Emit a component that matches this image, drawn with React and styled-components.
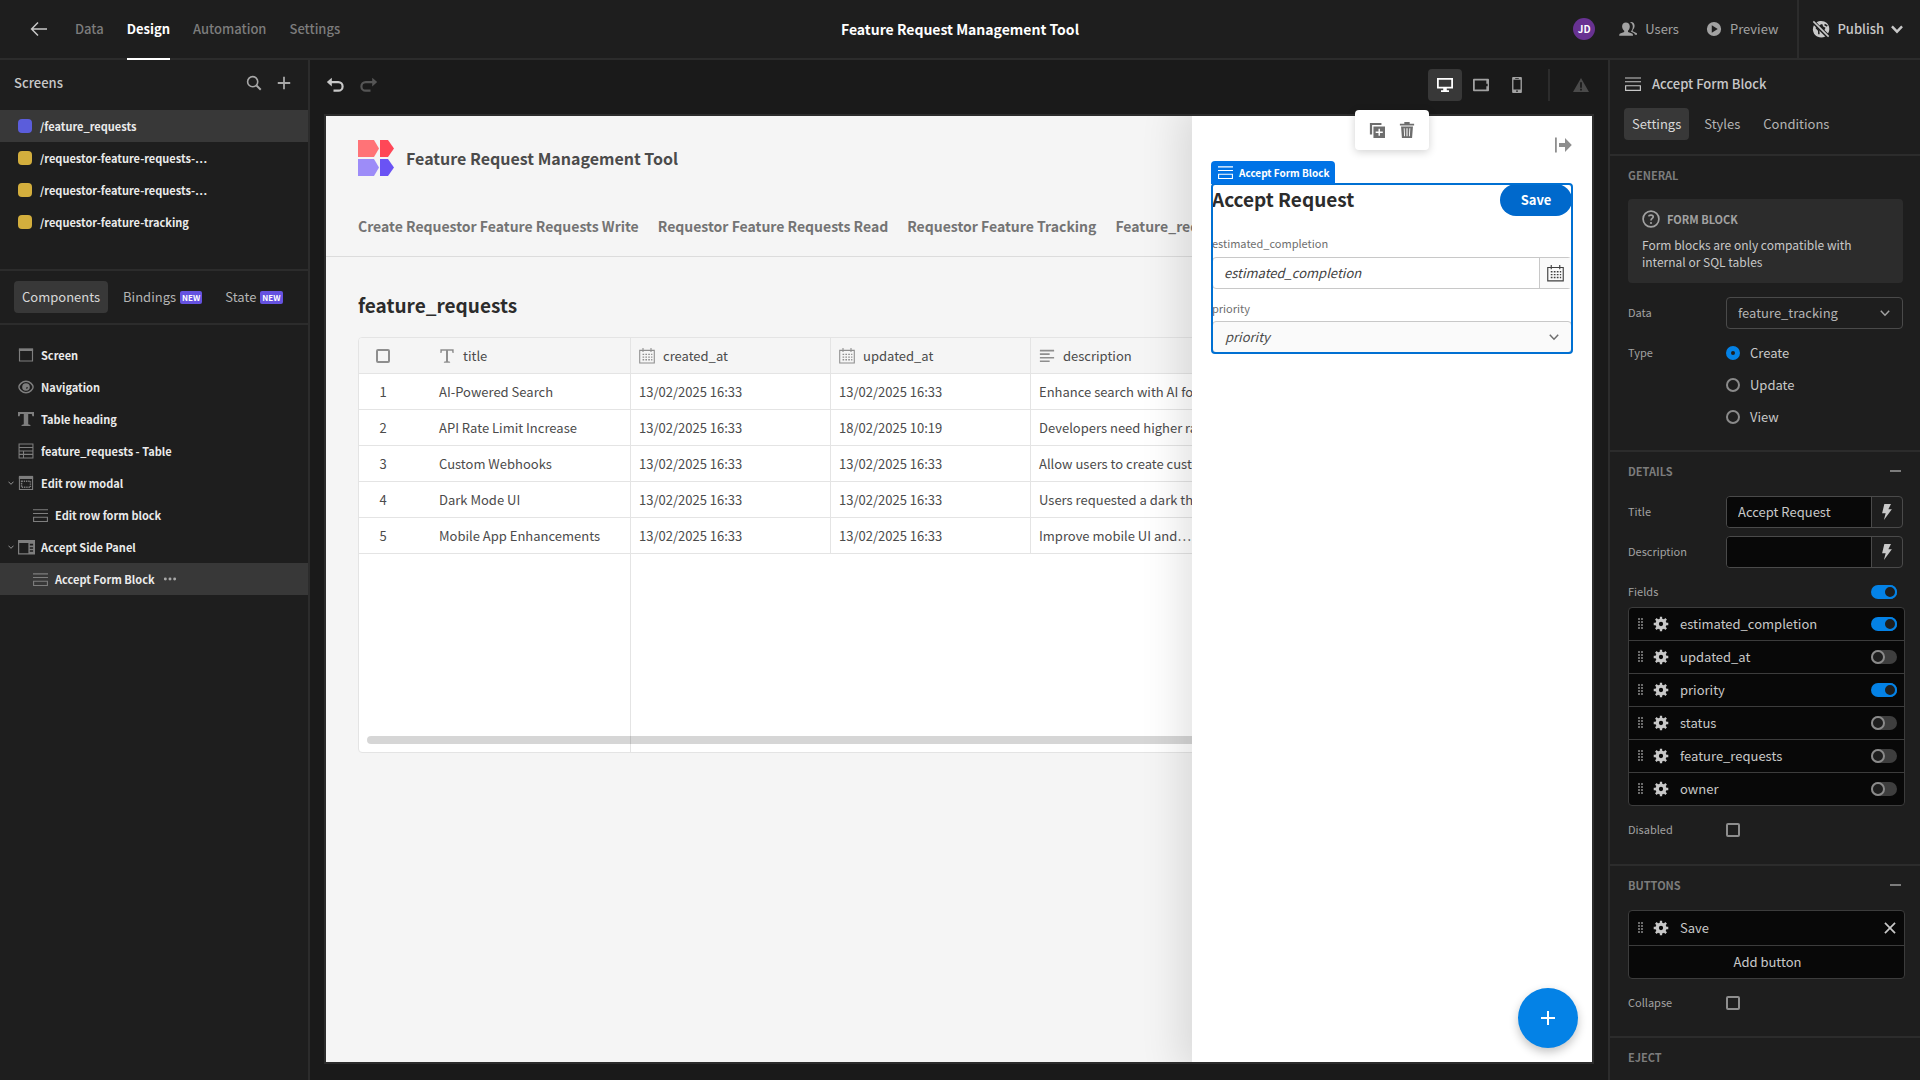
import React, { useState } from "react";
import styled, { createGlobalStyle, css } from "styled-components";

const c = {
  bg: "#1e1e1e",
  stage: "#1a1a1a",
  line: "#2c2c2c",
  raised: "#383838",
  dim: "#7c7c7c",
  mid: "#a2a2a2",
  text: "#c8c8c8",
  bright: "#ebebeb",
  well: "#080808",
  blue: "#0482e6",
};

const Global = createGlobalStyle`
  *, *::before, *::after { box-sizing: border-box; }
  html, body, #root { height: 100%; }
  body {
    margin: 0;
    background: ${c.bg};
    color: ${c.text};
    font-family: "Noto Sans CJK SC", "Noto Sans", sans-serif;
    font-size: 13px;
    line-height: 18px;
    overflow: hidden;
  }
  button, input, select { font: inherit; color: inherit; margin: 0; }
  h1, h2, h3, p, ul { margin: 0; padding: 0; }
  ul { list-style: none; }
  a { color: inherit; text-decoration: none; }
  svg { display: block; flex: none; }
`;

/* ---------- icons ---------- */

const Svg = ({ size = 16, children, ...rest }) => (
  <svg width={size} height={size} viewBox="0 0 18 18" fill="currentColor" aria-hidden="true" {...rest}>
    {children}
  </svg>
);
const Line = ({ w = 2, ...rest }) => <path fill="none" stroke="currentColor" strokeWidth={w} {...rest} />;

const BackIcon = () => <Svg size={18}><Line w={1.5} d="M17 9H2M8 2.5L1.6 9L8 15.5" /></Svg>;
const SearchIcon = () => (
  <Svg><circle cx="7.5" cy="7.5" r="5.7" fill="none" stroke="currentColor" strokeWidth="1.8" /><Line w={2.2} d="M11.8 11.8L16.6 16.6" /></Svg>
);
const PlusIcon = ({ size = 16 }) => <Svg size={size}><Line d="M9 2V16M2 9H16" /></Svg>;
const UsersIcon = () => (
  <Svg size={18}>
    <path d="M11 2.2c2.6-.7 4.6 1 4.600 3.500 0 1.800-.8 3.300-1.900 4.300v1.200l3.700 1.700c.6.3.8.9.8 1.800h-2.300c-.2-1-.8-1.600-1.700-2l-2.400-1.100c1.300-1.300 2-3.100 2-5.100 0-1.900-.9-3.400-2.800-4.300z" />
    <path d="M6.900 2.500c2.200 0 3.900 1.600 3.900 4 0 1.900-.8 3.400-1.800 4.300v1.200l4 1.600c.7.300 1 1 1 2.100H.2c0-1.100.3-1.800 1-2.100l4-1.600v-1.200c-1.100-.9-2.100-2.400-2.100-4.300 0-2.400 1.600-4 3.800-4z" />
  </Svg>
);
const PlayIcon = () => <Svg><path fillRule="evenodd" d="M9 1a8 8 0 100 16A8 8 0 009 1zM6.500 4.800L13.200 9L6.500 13.200z" /></Svg>;
const GlobeOffIcon = () => (
  <Svg size={18}>
    <path d="M4.500 2.300C7.500.3 12 .4 14.800 3c3 3 3.200 7.300 1.200 10.600L12.500 10l1-2.200-2.300-1.300-1-2.500-1.600.5L7.500 5.400z" />
    <path d="M1.900 5.200L13.300 16.500c-3.600 1.900-7.900 1-10.400-1.800C.5 11.900.4 8.200 1.900 5.200z" />
    <path d="M.8 1.900L1.900.8 17.200 16.100 16.100 17.200z" />
    <path d="M4 7.500l2.700 3 .2 3.800M12.500 4.500l2.800 1.500" stroke={c.bg} strokeWidth="1.500" fill="none" />
  </Svg>
);
const ChevronIcon = ({ size = 10, w = 2 }) => (
  <svg width={size} height={size} viewBox="0 0 10 10" aria-hidden="true">
    <path d="M.8 2.800L5 7.200L9.200 2.800" fill="none" stroke="currentColor" strokeWidth={w} />
  </svg>
);
const UndoIcon = ({ flip }) => (
  <Svg size={18} transform={flip ? "scale(-1 1)" : undefined}>
    <path d="M5.800 1.800V10.400L.8 6.100z" />
    <Line w={2.200} d="M5 6.100H12.300A4.200 4.200 0 0112.300 14.700H7.500" />
  </Svg>
);
const DesktopIcon = () => <Svg><path fillRule="evenodd" d="M0 1h18v12h-7v2h2.500v2h-9v-2H7v-2H0zM2 3v8h14V3z" /></Svg>;
const TabletIcon = () => <Svg><path fillRule="evenodd" d="M1 2h16a1 1 0 011 1v12a1 1 0 01-1 1H1a1 1 0 01-1-1V3a1 1 0 011-1zM2 4v10h13v-3.500h1.500v-3H15V4z" /></Svg>;
const PhoneIcon = () => <Svg><path fillRule="evenodd" d="M4.500 0h9a1 1 0 011 1v16a1 1 0 01-1 1h-9a1 1 0 01-1-1V1a1 1 0 011-1zM5 3v11h8V3zM8 15.200v1.400h2v-1.400zM7 1v1h4V1z" /></Svg>;
const AlertIcon = () => <Svg><path fillRule="evenodd" d="M9 1L18 17H0zM8 6v6h2V6zM8 13.300v2h2v-2z" /></Svg>;
const FormIcon = ({ size = 14 }) => (
  <Svg size={size}><Line w={1.300} d="M0 2.200H18M0 6.500H18M.7 11H17.300V16.200H.7z" /></Svg>
);
const ScreenIcon = () => <Svg><path d="M1 1.500h16v3H1z" /><Line w={1.300} d="M1.700 2.500V15.800H16.300V2.500" /></Svg>;
const EyeIcon = () => (
  <Svg><path d="M9 2.500C4.500 2.500 1 6.800 1 9s3.500 6.500 8 6.500S17 11.200 17 9 13.500 2.500 9 2.500z" fill="none" stroke="currentColor" strokeWidth="1.600" /><path fillRule="evenodd" d="M9 4.700a4.300 4.300 0 100 8.600 4.300 4.300 0 000-8.600zM9.300 6.200v3h2a2.300 2.300 0 01-2 2z" /></Svg>
);
const TextIcon = ({ size = 14, thin }) => (
  <Svg size={size}>
    {thin
      ? <path d="M1.500 1.500h15v4.200h-1.300l-.6-2.500h-4.500V15l2.400.6v.9h-7v-.9L7.900 15V3.200H3.400l-.6 2.500H1.500z" />
      : <path d="M0 1h18v5h-1.800L15.500 3.500H11.500V15l2.500.7V17H4v-1.300l2.500-.7V3.500H2.500L1.800 6H0z" />}
  </Svg>
);
const TableIcon = () => (
  <Svg size={16}><Line w={1.200} d="M1.200 1.200H16.800V16.800H1.200zM1.200 5H16.800M1.200 8.900H16.800M1.200 12.800H16.800M6.200 8.900V16.800" /></Svg>
);
const ModalIcon = () => (
  <Svg><path d="M1 1h16v3.500H1z" /><Line w={1.200} d="M1.600 2V16.400H16.400V2" /><Line w={1.600} strokeDasharray="1.500 1" d="M4 7H14V13.800H4z" /></Svg>
);
const SidePanelIcon = () => (
  <Svg size={17}><path fillRule="evenodd" d="M0 1h18v15.500H0zM1.300 4.200v11H11v-11zM12.500 5v2h3.500V5zM12.500 8.700v1.500h3.500V8.700zM12.500 12v1.500h3.500V12z" /></Svg>
);
const MoreIcon = () => <Svg size={14}><circle cx="3" cy="9" r="1.900" /><circle cx="9" cy="9" r="1.900" /><circle cx="15" cy="9" r="1.900" /></Svg>;
const CalendarIcon = ({ size = 16 }) => (
  <Svg size={size}>
    <Line w={1.200} d="M.8 2.700H17.200V16.800H.8zM4.500 0V4.500M13.500 0V4.500" />
    <Line w={1.500} strokeDasharray="1.800 1.400" d="M4 7.200H15M4 10.200H15M4 13.200H15" />
  </Svg>
);
const LinesIcon = () => <Svg><path d="M1 2h16v1.800H1zM1 6h11v1.800H1zM1 10h16v1.800H1zM1 14h11v1.800H1z" /></Svg>;
const DuplicateIcon = () => (
  <Svg><path d="M1 1h13v2.500H3.500V14H1z" /><path fillRule="evenodd" d="M5 5h13v13H5zM10.700 7.500v3.200H7.500v1.600h3.200v3.200h1.600v-3.200h3.200v-1.600h-3.200V7.500z" /></Svg>
);
const TrashIcon = () => (
  <Svg><path fillRule="evenodd" d="M6 0h6v2h5v2H1V2h5zM2.300 5h13.400l-1 13H3.300zM5.300 7l.5 9h1L6.300 7zM8.400 7v9h1.200V7zM11.700 7l-.5 9h1l.5-9z" /></Svg>
);
const CloseOutIcon = () => <Svg size={18}><path d="M1 1.500h1.800v15H1zM5 7h6V2l6.800 7L11 16v-5H5z" /></Svg>;
const HelpIcon = () => (
  <Svg size={18}>
    <circle cx="9" cy="9" r="7.900" fill="none" stroke="currentColor" strokeWidth="1.700" />
    <Line w={1.700} d="M6.600 6.400C7 4.700 11.200 4.400 11.200 6.800C11.200 8.500 9 8.400 9 10.600" /><circle cx="9" cy="13" r="1.100" />
  </Svg>
);
const BoltIcon = () => <Svg><path d="M6 0h7.500L10.500 6H14.500L5.500 18L7.500 10.500H3.500z" /></Svg>;
const GearIcon = () => (
  <Svg size={16}>
    <circle cx="9" cy="9" r="4.300" fill="none" stroke="currentColor" strokeWidth="3.800" />
    <Line w={2.600} d="M9 .8V4M9 14V17.200M.8 9H4M14 9H17.200M3.200 3.200L5.200 5.200M12.800 12.800L14.800 14.800M3.200 14.800L5.200 12.800M12.800 5.200L14.800 3.200" />
  </Svg>
);
const GripIcon = () => (
  <svg width="6" height="12" viewBox="0 0 6 12" fill="currentColor" aria-hidden="true">
    {[0, 3, 6, 9].map((y) => <path key={y} d={`M0 ${y}h2v2h-2zM3 ${y}h2v2h-2z`} />)}
  </svg>
);
const CrossIcon = () => <Svg size={14}><Line w={2.200} d="M2.500 2.500L15.500 15.500M15.500 2.500L2.500 15.500" /></Svg>;
const LogoIcon = () => (
  <svg width="36" height="36" viewBox="0 0 36 36" aria-hidden="true">
    <path fill="#ff7377" d="M0 0H16L21 8.500L16 17H0z" /><path fill="#ff4757" d="M22 0H30L36 8.500L30 17H22z" />
    <path fill="#9d8cf8" d="M0 19H16L21 27.500L16 36H0z" /><path fill="#6a53f4" d="M22 19H30L36 27.500L30 36H22z" />
  </svg>
);

/* ---------- shell ---------- */

const Shell = styled.div`
  display: grid;
  grid-template-rows: 60px minmax(0, 1fr);
  height: 100vh;
`;
const TopBar = styled.header`
  display: grid;
  grid-template-columns: 1fr auto 1fr;
  border-bottom: 2px solid ${c.line};
`;
const TopNav = styled.nav`
  display: flex;
  align-items: center;
  gap: 23px;
  padding-left: 30px;
  margin-bottom: -2px;
`;
const TopLink = styled.a`
  display: flex;
  align-items: center;
  height: 100%;
  font-size: 13px;
  font-weight: ${(p) => (p.$active ? 600 : 500)};
  color: ${(p) => (p.$active ? "#fff" : c.dim)};
  border-bottom: 2px solid ${(p) => (p.$active ? "#fff" : "transparent")};
`;
const BackLink = styled(TopLink)`
  color: ${c.text};
  margin-right: 4px;
`;
const AppTitle = styled.h1`
  align-self: center;
  font-size: 14px;
  line-height: 20px;
  font-weight: 600;
  color: #fff;
`;
const TopActions = styled.div`
  display: flex;
  justify-content: flex-end;
  align-items: center;
`;
const Avatar = styled.span`
  display: grid;
  place-items: center;
  width: 22px;
  height: 22px;
  margin-right: 24px;
  border-radius: 50%;
  background: #683292;
  color: #fff;
  font-size: 10px;
  line-height: 12px;
  font-weight: 700;
`;
const TopButton = styled.button`
  display: flex;
  align-items: center;
  gap: 8px;
  height: 32px;
  padding: 0;
  margin-right: ${(p) => p.$after || 0}px;
  border: 0;
  background: none;
  color: ${c.mid};
`;
const PublishButton = styled(TopButton)`
  gap: 7px;
  height: 100%;
  padding: 0 17px 0 13px;
  border-left: 2px solid ${c.line};
  color: ${c.text};
  font-weight: 500;
`;
const Body = styled.div`
  display: grid;
  grid-template-columns: 310px minmax(0, 1fr) 312px;
  min-height: 0;
`;

/* ---------- left panel ---------- */

const LeftPanel = styled.aside`
  border-right: 2px solid ${c.line};
  background: ${c.bg};
`;
const PanelHead = styled.div`
  display: flex;
  align-items: center;
  gap: 14px;
  height: 50px;
  padding: 0 16px 4px 14px;
`;
const PanelTitle = styled.h2`
  flex: 1;
  font-size: 13px;
  font-weight: 500;
`;
const IconButton = styled.button`
  display: grid;
  place-items: center;
  padding: 0;
  border: 0;
  border-radius: 4px;
  background: none;
  color: ${(p) => p.$color || "#a8a8a8"};
`;
const ScreenList = styled.ul`
  height: 159px;
`;
const Row = styled.li`
  display: flex;
  align-items: center;
  height: 32px;
  padding-left: ${(p) => p.$pad}px;
  background: ${(p) => (p.$selected ? c.raised : "none")};
  font-size: 11px;
  line-height: 16px;
  font-weight: 600;
  color: ${c.bright};
`;
const Swatch = styled.span`
  width: 14px;
  height: 14px;
  margin-right: 8px;
  border-radius: 4px;
  background: ${(p) => p.$color};
`;
const TabStrip = styled.div`
  display: flex;
  gap: 7px;
  padding: 10px 14px;
  border-top: 2px solid ${c.line};
  border-bottom: 2px solid ${c.line};
`;
const Tab = styled.button`
  display: flex;
  align-items: center;
  gap: 4px;
  height: 32px;
  padding: 0 ${(p) => p.$pad || 8}px;
  border: 0;
  border-radius: 4px;
  background: ${(p) => (p.$active ? c.raised : "none")};
  color: ${(p) => (p.$active ? "#d8d8d8" : "#b4b4b4")};
`;
const NewBadge = styled.span`
  padding: 0 2px;
  border-radius: 2px;
  background: #6552e0;
  color: #fff;
  font-size: 8px;
  line-height: 13px;
  font-weight: 700;
`;
const Tree = styled.ul`
  padding-top: 14px;
`;
const Caret = styled.span`
  width: 6px;
  margin-right: 4px;
  color: ${c.mid};
`;
const TreeIcon = styled.span`
  display: grid;
  place-items: center;
  width: 16px;
  margin-right: 7px;
  color: #7e7e7e;
`;
const RowMenu = styled(IconButton)`
  margin-left: 8px;
`;

/* ---------- stage ---------- */

const Stage = styled.main`
  display: flex;
  flex-direction: column;
  min-width: 0;
  padding: 0 14px 16px;
  background: ${c.stage};
`;
const StageBar = styled.div`
  display: flex;
  justify-content: space-between;
  align-items: center;
  height: 54px;
  padding: 0 5px 4px 2px;
`;
const BarGroup = styled.div`
  display: flex;
  align-items: center;
  gap: ${(p) => p.$gap}px;
`;
const DeviceButton = styled(IconButton)`
  width: 34px;
  height: 32px;
  background: ${(p) => (p.$active ? c.raised : "none")};
  color: ${(p) => (p.$active ? "#fff" : c.mid)};
`;
const BarDivider = styled.span`
  width: 2px;
  height: 32px;
  margin: 0 21px 0 12px;
  background: ${c.line};
`;
const Canvas = styled.div`
  position: relative;
  flex: 1;
  min-height: 0;
  border: 2px solid ${c.line};
  background: #f5f5f5;
  color: #4b4b4b;
`;
const Clip = styled.div`
  position: absolute;
  inset: 0;
  overflow: hidden;
`;
const AppHeader = styled.header`
  display: flex;
  flex-direction: column;
  gap: 39px;
  padding: 24px 32px 18px;
  border-bottom: 1px solid #dcdcdc;
`;
const Brand = styled.div`
  display: flex;
  align-items: center;
  gap: 12px;
  font-size: 16px;
  line-height: 24px;
  font-weight: 600;
  color: #4b4b4b;
`;
const AppNav = styled.nav`
  display: flex;
  gap: 19px;
  white-space: nowrap;
  font-size: 14px;
  line-height: 23px;
  font-weight: 600;
  color: #747474;
`;
const AppBody = styled.section`
  padding: 32px;
`;
const AppHeading = styled.h2`
  margin-bottom: ${(p) => p.$after || 0}px;
  font-size: 19px;
  line-height: ${(p) => p.$lh}px;
  font-weight: 600;
  color: #2c2c2c;
`;
const GridFrame = styled.div`
  position: relative;
  overflow: hidden;
  border: 1px solid #e4e4e4;
  border-radius: 4px;
  background: #fff;
`;
const Grid = styled.table`
  width: 100%;
  table-layout: fixed;
  border-collapse: separate;
  border-spacing: 0;
`;
const cell = css`
  height: 36px;
  padding: 0 8px;
  border-bottom: 1px solid #e4e4e4;
  border-right: ${(p) => (p.$open ? "0" : "1px solid #e4e4e4")};
  text-align: left;
  font-weight: 400;
  white-space: nowrap;
  overflow: hidden;
`;
const Th = styled.th`
  ${cell}
  background: #f5f5f5;
  padding-left: ${(p) => p.$lead || 8}px;
`;
const Td = styled.td`
  ${cell}
  padding-left: ${(p) => p.$lead || 8}px;
`;
const NumTd = styled(Td)`
  padding: 0;
  text-align: center;
`;
const FillTd = styled.td`
  height: 198px;
  border-right: ${(p) => (p.$edge ? "1px solid #e4e4e4" : "0")};
`;
const Col = styled.col`
  width: ${(p) => p.$w}px;
`;
const ThLabel = styled.span`
  display: flex;
  align-items: center;
  gap: 8px;
  color: #4b4b4b;
  & svg { color: #8e8e8e; }
`;
const ScrollThumb = styled.div`
  position: absolute;
  left: 8px;
  right: 200px;
  bottom: 8px;
  height: 8px;
  border-radius: 4px;
  background: rgba(0, 0, 0, 0.16);
`;
const Check = styled.input.attrs({ type: "checkbox" })`
  appearance: none;
  display: block;
  width: 14px;
  height: 14px;
  border: 2px solid #8e8e8e;
  border-radius: 2px;
`;

const SidePanel = styled.section`
  position: absolute;
  top: 0;
  right: 0;
  bottom: 0;
  width: 400px;
  padding: 20px;
  background: #fff;
  box-shadow: 0 0 40px 10px rgba(0, 0, 0, 0.12);
`;
const PanelClose = styled.div`
  display: flex;
  justify-content: flex-end;
  align-items: flex-start;
  height: 48px;
`;
const FormBlock = styled.form`
  position: relative;
  display: flex;
  flex-direction: column;
  border-radius: 3px;
  outline: 2px solid #0070d2;
  outline-offset: -1px;
`;
const BlockTag = styled.div`
  position: absolute;
  left: -1px;
  bottom: 100%;
  display: flex;
  align-items: center;
  gap: 6px;
  height: 23px;
  padding: 0 5px 0 7px;
  border-radius: 4px 4px 0 0;
  background: #0073e6;
  color: #fff;
  font-size: 10px;
  line-height: 16px;
  font-weight: 600;
`;
const FormHead = styled.div`
  display: flex;
  justify-content: space-between;
  align-items: flex-start;
  height: 49px;
`;
const SaveButton = styled.button`
  width: 72px;
  height: 32px;
  border: 0;
  border-radius: 16px;
  background: #0069cc;
  color: #fff;
  font-weight: 700;
`;
const FormLabel = styled.label`
  height: 24px;
  font-size: 11px;
  line-height: ${(p) => p.$lh}px;
  color: #6e6e6e;
`;
const DateBox = styled.div`
  display: flex;
  height: 32px;
  margin-bottom: 8px;
  border: 1px solid #c8c8c8;
  border-radius: 4px;
`;
const DateInput = styled.input`
  flex: 1;
  min-width: 0;
  padding: 0 11px;
  border: 0;
  background: none;
  font-style: italic;
  &::placeholder { color: #3f3f3f; opacity: 1; }
`;
const DateButton = styled(IconButton)`
  width: 32px;
  border-left: 1px solid #c8c8c8;
  border-radius: 0;
  background: #fafafa;
`;
const SelectWrap = styled.div`
  display: grid;
  align-items: center;
  & > * { grid-area: 1 / 1; }
  & > svg {
    justify-self: end;
    margin-right: 13px;
    pointer-events: none;
    color: ${(p) => p.$chevron};
  }
`;
const LightSelect = styled.select`
  appearance: none;
  width: 100%;
  height: 32px;
  padding: 0 32px 0 12px;
  border: 1px solid #c8c8c8;
  border-radius: 4px;
  background: #fafafa;
  font-style: italic;
  color: #4b4b4b;
`;
const FloatMenu = styled.div`
  position: absolute;
  top: -6px;
  right: 163px;
  display: flex;
  align-items: center;
  justify-content: center;
  gap: 14px;
  width: 74px;
  height: 40px;
  border-radius: 4px;
  background: #fff;
  box-shadow: 0 2px 8px rgba(0, 0, 0, 0.18);
`;
const Fab = styled.button`
  position: absolute;
  right: 14px;
  bottom: 14px;
  display: grid;
  place-items: center;
  width: 60px;
  height: 60px;
  padding: 0;
  border: 0;
  border-radius: 50%;
  background: ${c.blue};
  color: #fff;
  box-shadow: 0 4px 10px rgba(0, 0, 0, 0.24);
`;

/* ---------- settings panel ---------- */

const RightPanel = styled.aside`
  overflow: hidden;
  border-left: 2px solid ${c.line};
  background: ${c.bg};
`;
const RightHead = styled.div`
  display: flex;
  align-items: center;
  gap: 11px;
  height: 48px;
  padding: 0 15px;
  font-weight: 500;
`;
const RightTabs = styled.div`
  display: flex;
  gap: 7px;
  height: 46px;
  padding: 0 14px;
`;
const Section = styled.section`
  display: flex;
  flex-direction: column;
  gap: 8px;
  padding: 9px 17px ${(p) => p.$bottom}px 18px;
  border-top: 2px solid ${c.line};
`;
const SectionHead = styled.div`
  display: flex;
  justify-content: space-between;
  align-items: center;
  height: 20px;
  margin-bottom: ${(p) => p.$after || 7}px;
  font-size: 11px;
  line-height: 16px;
  font-weight: 700;
  color: ${c.dim};
`;
const SectionTitle = styled.h3`
  font: inherit;
`;
const Fold = styled(IconButton)`
  width: 16px;
  height: 14px;
  &::before {
    content: "";
    width: 11px;
    height: 2px;
    background: ${c.dim};
  }
`;
const InfoCard = styled.div`
  padding: 10px 14px 13px;
  margin-bottom: 6px;
  border-radius: 4px;
  background: ${c.line};
`;
const InfoTitle = styled.div`
  display: flex;
  align-items: center;
  gap: 7px;
  height: 20px;
  margin-bottom: 7px;
  font-size: 11px;
  line-height: 16px;
  font-weight: 600;
  color: ${c.mid};
`;
const InfoText = styled.p`
  font-size: 12px;
  line-height: 17px;
`;
const Field = styled.div`
  display: grid;
  grid-template-columns: 98px minmax(0, 1fr);
  align-items: start;
  min-height: 32px;
`;
const FieldLabel = styled.label`
  font-size: 11px;
  line-height: 31px;
  color: ${c.mid};
`;
const DarkSelect = styled.select`
  appearance: none;
  width: 100%;
  height: 32px;
  padding: 0 32px 0 11px;
  border: 1px solid #4a4a4a;
  border-radius: 4px;
  background: ${c.bg};
  color: #b4b4b4;
`;
const RadioLabel = styled.label`
  display: flex;
  align-items: center;
  gap: 10px;
  height: 32px;
`;
const Radio = styled.input.attrs({ type: "radio" })`
  appearance: none;
  width: 14px;
  height: 14px;
  border: 2px solid #8a8a8a;
  border-radius: 50%;
  &:checked { border: 5px solid ${c.blue}; }
`;
const InputBox = styled.div`
  display: flex;
  height: 32px;
  border: 1px solid #4a4a4a;
  border-radius: 4px;
  overflow: hidden;
`;
const DarkInput = styled.input`
  flex: 1;
  min-width: 0;
  padding: 0 11px;
  border: 0;
  background: ${c.well};
`;
const BoltButton = styled(IconButton)`
  width: 31px;
  border-left: 1px solid #4a4a4a;
  border-radius: 0;
`;
const ToggleField = styled.div`
  display: flex;
  justify-content: space-between;
  align-items: center;
  height: 31px;
  padding-right: 6px;
`;
const Toggle = styled.input.attrs({ type: "checkbox" })`
  appearance: none;
  display: flex;
  width: 26px;
  height: 14px;
  border-radius: 7px;
  background: #3e3e3e;
  &::before {
    content: "";
    width: 14px;
    height: 14px;
    border: 2px solid #8a8a8a;
    border-radius: 50%;
    background: ${c.bg};
  }
  &:checked { background: ${c.blue}; justify-content: flex-end; }
  &:checked::before { border-color: ${c.blue}; }
`;
const ItemList = styled.ul`
  margin-right: -2px;
  border: 1px solid #3c3c3c;
  border-radius: 4px;
  background: ${c.well};
`;
const Item = styled.li`
  display: flex;
  align-items: center;
  height: ${(p) => p.$h || 32}px;
  padding: 0 7px 0 9px;
  color: ${c.text};
  & + & { height: 33px; border-top: 1px solid #3c3c3c; }
`;
const Grip = styled.span`
  margin-right: 9px;
  color: #6a6a6a;
`;
const ItemName = styled.label`
  flex: 1;
  margin-left: 11px;
`;
const AddButton = styled.button`
  flex: 1;
  height: 32px;
  padding: 0;
  border: 0;
  background: none;
`;
const DarkCheck = styled(Check)`
  margin-top: 9px;
`;
const FieldGroup = styled.div`
  display: flex;
  flex-direction: column;
`;

/* ---------- data ---------- */

const YELLOW = "#d3ae3d";
const screens = [
  ["/feature_requests", "#5b5ddb", true],
  ["/requestor-feature-requests-…", YELLOW],
  ["/requestor-feature-requests-…", YELLOW],
  ["/requestor-feature-tracking", YELLOW],
];
const tree = [
  { name: "Screen", icon: <ScreenIcon /> },
  { name: "Navigation", icon: <EyeIcon /> },
  { name: "Table heading", icon: <TextIcon size={16} /> },
  { name: "feature_requests - Table", icon: <TableIcon /> },
  { name: "Edit row modal", icon: <ModalIcon />, open: true },
  { name: "Edit row form block", icon: <FormIcon size={15} />, child: true },
  { name: "Accept Side Panel", icon: <SidePanelIcon />, open: true },
  { name: "Accept Form Block", icon: <FormIcon size={15} />, child: true, selected: true },
];
const rows = [
  ["AI-Powered Search", "13/02/2025 16:33", "13/02/2025 16:33", "Enhance search with AI for better"],
  ["API Rate Limit Increase", "13/02/2025 16:33", "18/02/2025 10:19", "Developers need higher rate"],
  ["Custom Webhooks", "13/02/2025 16:33", "13/02/2025 16:33", "Allow users to create custom"],
  ["Dark Mode UI", "13/02/2025 16:33", "13/02/2025 16:33", "Users requested a dark theme"],
  ["Mobile App Enhancements", "13/02/2025 16:33", "13/02/2025 16:33", "Improve mobile UI and…"],
];
const fieldNames = ["estimated_completion", "updated_at", "priority", "status", "feature_requests", "owner"];

/* ---------- views ---------- */

function Header() {
  return (
    <TopBar>
      <TopNav>
        <BackLink href="#back" aria-label="Back"><BackIcon /></BackLink>
        <TopLink href="#data">Data</TopLink>
        <TopLink href="#design" $active>Design</TopLink>
        <TopLink href="#automation">Automation</TopLink>
        <TopLink href="#settings">Settings</TopLink>
      </TopNav>
      <AppTitle>Feature Request Management Tool</AppTitle>
      <TopActions>
        <Avatar>JD</Avatar>
        <TopButton $after={27}><UsersIcon />Users</TopButton>
        <TopButton $after={19}><PlayIcon />Preview</TopButton>
        <PublishButton><GlobeOffIcon />Publish<ChevronIcon size={12} /></PublishButton>
      </TopActions>
    </TopBar>
  );
}

function Sidebar() {
  return (
    <LeftPanel>
      <PanelHead>
        <PanelTitle>Screens</PanelTitle>
        <IconButton aria-label="Search"><SearchIcon /></IconButton>
        <IconButton aria-label="Add screen"><PlusIcon /></IconButton>
      </PanelHead>
      <ScreenList>
        {screens.map(([name, color, selected], i) => (
          <Row key={i} $pad={18} $selected={selected}><Swatch $color={color} />{name}</Row>
        ))}
      </ScreenList>
      <TabStrip>
        <Tab $active>Components</Tab>
        <Tab>Bindings <NewBadge>NEW</NewBadge></Tab>
        <Tab>State <NewBadge>NEW</NewBadge></Tab>
      </TabStrip>
      <Tree>
        {tree.map((n) => (
          <Row key={n.name} $pad={n.child ? 22 : 8} $selected={n.selected}>
            <Caret>{n.open && <ChevronIcon size={6} w={1.500} />}</Caret>
            <TreeIcon>{n.icon}</TreeIcon>
            {n.name}
            {n.selected && <RowMenu aria-label="More actions"><MoreIcon /></RowMenu>}
          </Row>
        ))}
      </Tree>
    </LeftPanel>
  );
}

function DataGrid() {
  return (
    <GridFrame>
      <Grid>
        <colgroup>
          <Col $w={48} /><Col $w={224} /><Col $w={200} /><Col $w={200} /><col />
        </colgroup>
        <thead>
          <tr>
            <Th $open $lead={17}><Check aria-label="Select all rows" /></Th>
            <Th $lead={32}><ThLabel><TextIcon thin size={16} />title</ThLabel></Th>
            <Th><ThLabel><CalendarIcon />created_at</ThLabel></Th>
            <Th><ThLabel><CalendarIcon />updated_at</ThLabel></Th>
            <Th><ThLabel><LinesIcon />description</ThLabel></Th>
          </tr>
        </thead>
        <tbody>
          {rows.map(([title, created, updated, text], i) => (
            <tr key={title}>
              <NumTd $open>{i + 1}</NumTd>
              <Td $lead={32}>{title}</Td>
              <Td>{created}</Td>
              <Td>{updated}</Td>
              <Td>{text}</Td>
            </tr>
          ))}
          <tr><FillTd colSpan={2} $edge /><FillTd colSpan={3} /></tr>
        </tbody>
      </Grid>
      <ScrollThumb />
    </GridFrame>
  );
}

function Preview() {
  return (
    <Canvas>
      <Clip>
        <AppHeader>
          <Brand><LogoIcon />Feature Request Management Tool</Brand>
          <AppNav>
            <a href="#write">Create Requestor Feature Requests Write</a>
            <a href="#read">Requestor Feature Requests Read</a>
            <a href="#tracking">Requestor Feature Tracking</a>
            <a href="#requests">Feature_requests</a>
          </AppNav>
        </AppHeader>
        <AppBody>
          <AppHeading $lh={32} $after={16}>feature_requests</AppHeading>
          <DataGrid />
        </AppBody>
        <SidePanel>
          <PanelClose>
            <IconButton $color="#8e8e8e" aria-label="Close panel"><CloseOutIcon /></IconButton>
          </PanelClose>
          <FormBlock>
            <BlockTag><FormIcon size={15} />Accept Form Block</BlockTag>
            <FormHead>
              <AppHeading $lh={30}>Accept Request</AppHeading>
              <SaveButton type="button">Save</SaveButton>
            </FormHead>
            <FormLabel htmlFor="eta" $lh={20}>estimated_completion</FormLabel>
            <DateBox>
              <DateInput id="eta" placeholder="estimated_completion" />
              <DateButton type="button" $color="#3f3f3f" aria-label="Pick a date"><CalendarIcon size={17} /></DateButton>
            </DateBox>
            <FormLabel htmlFor="prio" $lh={22}>priority</FormLabel>
            <SelectWrap $chevron="#6e6e6e">
              <LightSelect id="prio"><option>priority</option></LightSelect>
              <ChevronIcon w={1.500} />
            </SelectWrap>
          </FormBlock>
        </SidePanel>
        <Fab aria-label="Add"><PlusIcon size={18} /></Fab>
      </Clip>
      <FloatMenu>
        <IconButton $color="#6e6e6e" aria-label="Duplicate"><DuplicateIcon /></IconButton>
        <IconButton $color="#6e6e6e" aria-label="Delete"><TrashIcon /></IconButton>
      </FloatMenu>
    </Canvas>
  );
}

function Settings() {
  const [type, setType] = useState("Create");
  const [on, setOn] = useState({ all: true, estimated_completion: true, priority: true });
  const flip = (k) => () => setOn((s) => ({ ...s, [k]: !s[k] }));
  return (
    <RightPanel>
      <RightHead><FormIcon size={16} />Accept Form Block</RightHead>
      <RightTabs>
        <Tab $active>Settings</Tab>
        <Tab>Styles</Tab>
        <Tab>Conditions</Tab>
      </RightTabs>
      <Section $bottom={17}>
        <SectionHead $after={6}><SectionTitle>GENERAL</SectionTitle></SectionHead>
        <InfoCard>
          <InfoTitle><HelpIcon />FORM BLOCK</InfoTitle>
          <InfoText>Form blocks are only compatible with internal or SQL tables</InfoText>
        </InfoCard>
        <Field>
          <FieldLabel htmlFor="data">Data</FieldLabel>
          <SelectWrap $chevron="#a2a2a2">
            <DarkSelect id="data"><option>feature_tracking</option></DarkSelect>
            <ChevronIcon w={1.500} />
          </SelectWrap>
        </Field>
        <Field>
          <FieldLabel as="span">Type</FieldLabel>
          <FieldGroup>
            {["Create", "Update", "View"].map((t) => (
              <RadioLabel key={t}>
                <Radio name="type" checked={type === t} onChange={() => setType(t)} />{t}
              </RadioLabel>
            ))}
          </FieldGroup>
        </Field>
      </Section>
      <Section $bottom={18}>
        <SectionHead><SectionTitle>DETAILS</SectionTitle><Fold aria-label="Collapse details" /></SectionHead>
        <Field>
          <FieldLabel htmlFor="title">Title</FieldLabel>
          <InputBox>
            <DarkInput id="title" defaultValue="Accept Request" />
            <BoltButton $color={c.text} aria-label="Bind title"><BoltIcon /></BoltButton>
          </InputBox>
        </Field>
        <Field>
          <FieldLabel htmlFor="desc">Description</FieldLabel>
          <InputBox>
            <DarkInput id="desc" />
            <BoltButton $color={c.text} aria-label="Bind description"><BoltIcon /></BoltButton>
          </InputBox>
        </Field>
        <FieldGroup>
          <ToggleField>
            <FieldLabel htmlFor="all">Fields</FieldLabel>
            <Toggle id="all" checked={!!on.all} onChange={flip("all")} />
          </ToggleField>
          <ItemList>
            {fieldNames.map((f) => (
              <Item key={f}>
                <Grip><GripIcon /></Grip>
                <IconButton $color={c.text} aria-label={`Configure ${f}`}><GearIcon /></IconButton>
                <ItemName htmlFor={`f-${f}`}>{f}</ItemName>
                <Toggle id={`f-${f}`} checked={!!on[f]} onChange={flip(f)} />
              </Item>
            ))}
          </ItemList>
        </FieldGroup>
        <Field>
          <FieldLabel htmlFor="disabled">Disabled</FieldLabel>
          <DarkCheck id="disabled" />
        </Field>
      </Section>
      <Section $bottom={17}>
        <SectionHead><SectionTitle>BUTTONS</SectionTitle><Fold aria-label="Collapse buttons" /></SectionHead>
        <ItemList>
          <Item $h={34}>
            <Grip><GripIcon /></Grip>
            <IconButton $color={c.text} aria-label="Configure Save"><GearIcon /></IconButton>
            <ItemName as="span">Save</ItemName>
            <IconButton $color={c.text} aria-label="Remove Save"><CrossIcon /></IconButton>
          </Item>
          <Item><AddButton>Add button</AddButton></Item>
        </ItemList>
        <Field>
          <FieldLabel htmlFor="collapse">Collapse</FieldLabel>
          <DarkCheck id="collapse" />
        </Field>
      </Section>
      <Section $bottom={17}>
        <SectionHead><SectionTitle>EJECT</SectionTitle></SectionHead>
      </Section>
    </RightPanel>
  );
}

export default function App() {
  return (
    <Shell>
      <Global />
      <Header />
      <Body>
        <Sidebar />
        <Stage>
          <StageBar>
            <BarGroup $gap={16}>
              <IconButton $color={c.text} aria-label="Undo"><UndoIcon /></IconButton>
              <IconButton $color="#555" aria-label="Redo"><UndoIcon flip /></IconButton>
            </BarGroup>
            <BarGroup $gap={2}>
              <DeviceButton $active aria-label="Desktop"><DesktopIcon /></DeviceButton>
              <DeviceButton aria-label="Tablet"><TabletIcon /></DeviceButton>
              <DeviceButton aria-label="Mobile"><PhoneIcon /></DeviceButton>
              <BarDivider />
              <IconButton $color="#4a4a4a" aria-label="Warnings"><AlertIcon /></IconButton>
            </BarGroup>
          </StageBar>
          <Preview />
        </Stage>
        <Settings />
      </Body>
    </Shell>
  );
}
